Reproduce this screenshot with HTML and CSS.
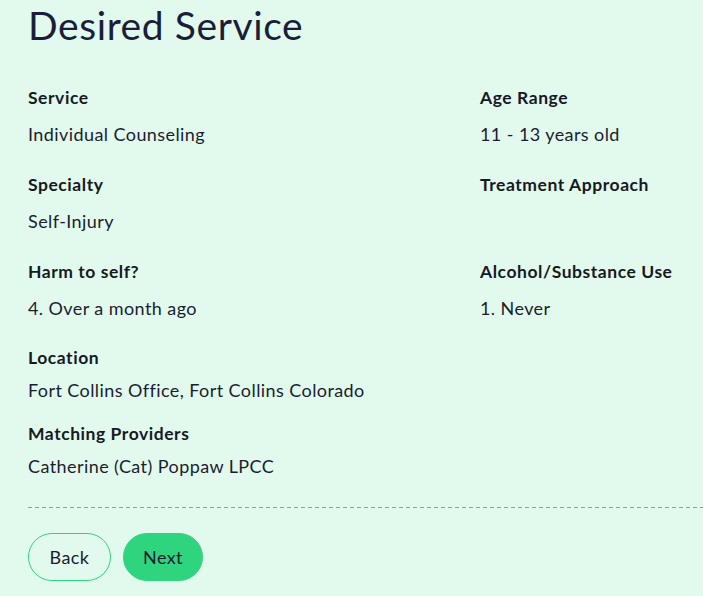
FILE: index.html
```html
<!DOCTYPE html>
<html>
<head>
<meta charset="utf-8">
<link rel="stylesheet" href="styles.css">
</head>
<body>
<main class="page">
  <h1 class="title">Desired Service</h1>
  <div class="grid">
    <div class="field"><div class="label">Service</div><div class="value">Individual Counseling</div></div>
    <div class="field"><div class="label">Age Range</div><div class="value">11 - 13 years old</div></div>
    <div class="field"><div class="label">Specialty</div><div class="value">Self-Injury</div></div>
    <div class="field"><div class="label">Treatment Approach</div><div class="value"></div></div>
    <div class="field"><div class="label">Harm to self?</div><div class="value">4. Over a month ago</div></div>
    <div class="field"><div class="label">Alcohol/Substance Use</div><div class="value">1. Never</div></div>
  </div>
  <div class="block"><div class="label">Location</div><div class="value tight">Fort Collins Office, Fort Collins Colorado</div></div>
  <div class="block"><div class="label">Matching Providers</div><div class="value tight">Catherine (Cat) Poppaw LPCC</div></div>
  <div class="divider"></div>
  <div class="actions">
    <button class="btn btn-outline">Back</button>
    <button class="btn btn-fill">Next</button>
  </div>
</main>
</body>
</html>
```

FILE: styles.css
```css
html, body {
  margin: 0;
  padding: 0;
  background: #e2faee;
  overflow: hidden;
}
body {
  font-family: "Lato", "Noto Sans", sans-serif;
  color: #1b1d2e;
  width: 703px;
  height: 596px;
}
.page {
  padding: 0 0 0 28px;
}
.title {
  margin: 0;
  padding-top: 2px;
  font-size: 39px;
  font-weight: 400;
  line-height: 46px;
  letter-spacing: 0.6px;
  color: #1a1e38;
  height: 60px;
}
.grid {
  display: grid;
  grid-template-columns: 452px 1fr;
  margin-top: 24px;
}
.field {
  height: 87px;
}
.label {
  font-size: 17.5px;
  font-weight: 700;
  line-height: 24px;
  letter-spacing: 0.55px;
  color: #17191f;
}
.value {
  font-size: 18px;
  line-height: 24px;
  letter-spacing: 0.42px;
  margin-top: 12px;
  min-height: 24px;
  color: #1b1d2e;
}
.value.tight {
  margin-top: 8px;
}
.block {
  margin-bottom: 20px;
}
.grid + .block {
  margin-top: -1px;
}
.divider {
  height: 1px;
  background: repeating-linear-gradient(90deg, #35cf7f 0 4px, transparent 4px 7px);
  margin: 29px 0 0 0;
}
.actions {
  display: flex;
  gap: 12px;
  margin-top: 25px;
}
.btn {
  font-family: inherit;
  font-size: 18px;
  letter-spacing: 0.4px;
  color: #1b1d2e;
  height: 48px;
  border-radius: 24px;
  padding: 0 18px;
  cursor: pointer;
}
.btn-outline {
  background: transparent;
  border: 1px solid #2fd47f;
  width: 83px;
}
.btn-fill {
  background: #2fd47f;
  border: 1px solid #2fd47f;
  width: 80px;
}
```
